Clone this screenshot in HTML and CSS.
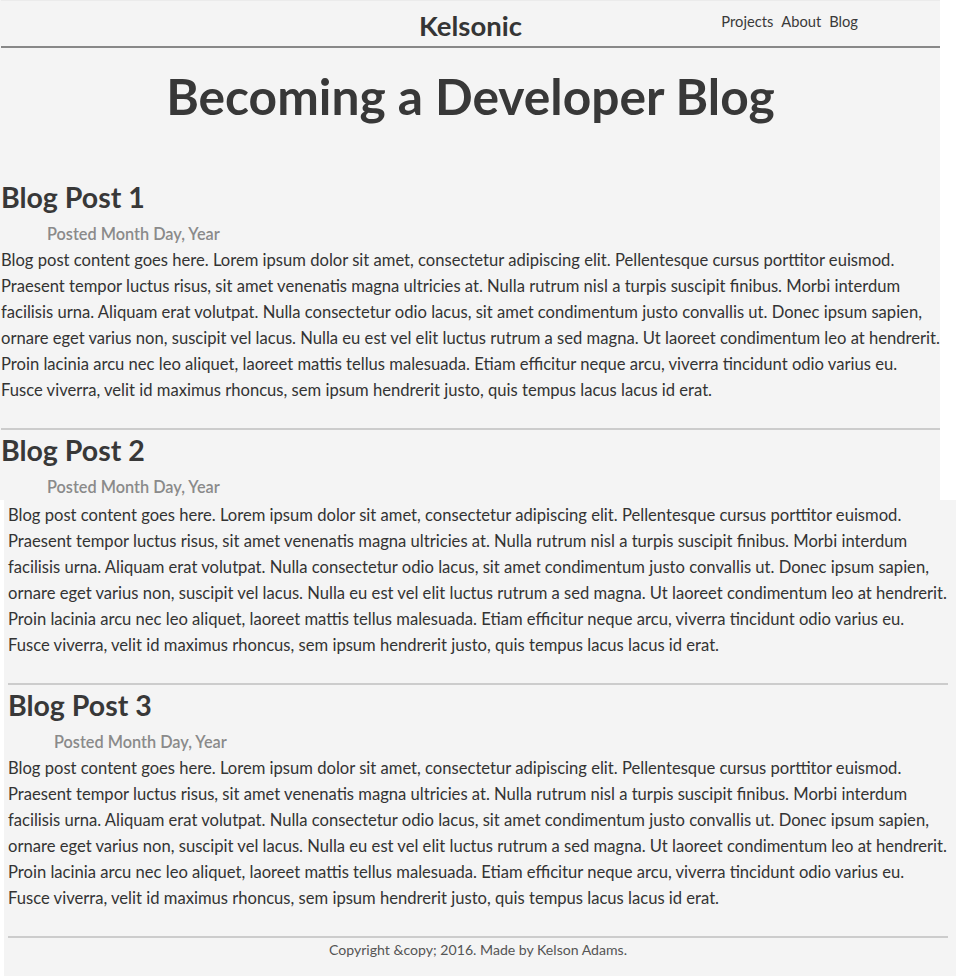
FILE: index.html
```html
<!DOCTYPE html>
<html lang="en">
<head>
<meta charset="utf-8">
<title>Becoming a Developer Blog</title>
<link rel="stylesheet" href="styles.css">
</head>
<body>
<div class="page-top">
  <header class="site-header">
    <div class="brand">Kelsonic</div>
    <nav class="nav">
      <a href="#">Projects</a>
      <a href="#">About</a>
      <a href="#">Blog</a>
    </nav>
  </header>
  <h1 class="page-title">Becoming a Developer Blog</h1>
  <article class="post">
    <h2 class="post-title">Blog Post 1</h2>
    <p class="post-date">Posted Month Day, Year</p>
    <p class="post-body">Blog post content goes here. Lorem ipsum dolor sit amet, consectetur adipiscing elit. Pellentesque cursus porttitor euismod.<br>Praesent tempor luctus risus, sit amet venenatis magna ultricies at. Nulla rutrum nisl a turpis suscipit finibus. Morbi interdum<br>facilisis urna. Aliquam erat volutpat. Nulla consectetur odio lacus, sit amet condimentum justo convallis ut. Donec ipsum sapien,<br>ornare eget varius non, suscipit vel lacus. Nulla eu est vel elit luctus rutrum a sed magna. Ut laoreet condimentum leo at hendrerit.<br>Proin lacinia arcu nec leo aliquet, laoreet mattis tellus malesuada. Etiam efficitur neque arcu, viverra tincidunt odio varius eu.<br>Fusce viverra, velit id maximus rhoncus, sem ipsum hendrerit justo, quis tempus lacus lacus id erat.</p>
  </article>
  <article class="post">
    <h2 class="post-title">Blog Post 2</h2>
    <p class="post-date">Posted Month Day, Year</p>
  </article>
</div>
<div class="page-bottom">
  <p class="post-body">Blog post content goes here. Lorem ipsum dolor sit amet, consectetur adipiscing elit. Pellentesque cursus porttitor euismod.<br>Praesent tempor luctus risus, sit amet venenatis magna ultricies at. Nulla rutrum nisl a turpis suscipit finibus. Morbi interdum<br>facilisis urna. Aliquam erat volutpat. Nulla consectetur odio lacus, sit amet condimentum justo convallis ut. Donec ipsum sapien,<br>ornare eget varius non, suscipit vel lacus. Nulla eu est vel elit luctus rutrum a sed magna. Ut laoreet condimentum leo at hendrerit.<br>Proin lacinia arcu nec leo aliquet, laoreet mattis tellus malesuada. Etiam efficitur neque arcu, viverra tincidunt odio varius eu.<br>Fusce viverra, velit id maximus rhoncus, sem ipsum hendrerit justo, quis tempus lacus lacus id erat.</p>
  <article class="post post-divided">
    <h2 class="post-title">Blog Post 3</h2>
    <p class="post-date">Posted Month Day, Year</p>
    <p class="post-body">Blog post content goes here. Lorem ipsum dolor sit amet, consectetur adipiscing elit. Pellentesque cursus porttitor euismod.<br>Praesent tempor luctus risus, sit amet venenatis magna ultricies at. Nulla rutrum nisl a turpis suscipit finibus. Morbi interdum<br>facilisis urna. Aliquam erat volutpat. Nulla consectetur odio lacus, sit amet condimentum justo convallis ut. Donec ipsum sapien,<br>ornare eget varius non, suscipit vel lacus. Nulla eu est vel elit luctus rutrum a sed magna. Ut laoreet condimentum leo at hendrerit.<br>Proin lacinia arcu nec leo aliquet, laoreet mattis tellus malesuada. Etiam efficitur neque arcu, viverra tincidunt odio varius eu.<br>Fusce viverra, velit id maximus rhoncus, sem ipsum hendrerit justo, quis tempus lacus lacus id erat.</p>
  </article>
  <footer class="site-footer">Copyright &amp;copy; 2016. Made by Kelson Adams.</footer>
</div>
</body>
</html>
```
FILE: styles.css
```css
html, body {
  margin: 0;
  padding: 0;
  background: #ffffff;
}

body {
  font-family: "Lato", "Open Sans", sans-serif;
  color: #353535;
}

.page-top {
  box-sizing: border-box;
  width: 940px;
  height: 500px;
  overflow: hidden;
  padding-left: 1px;
  background: #f4f4f4;
}

.page-bottom {
  box-sizing: border-box;
  width: 952px;
  margin-left: 4px;
  padding: 2px 8px 20px 4px;
  background: #f4f4f4;
}

.site-header {
  display: grid;
  grid-template-columns: 1fr auto 1fr;
  height: 41px;
  padding-top: 4px;
  border-top: 1px solid #ebebeb;
  border-bottom: 2px solid #888888;
}

.brand {
  grid-column: 2;
  font-size: 27.5px;
  font-weight: 700;
  line-height: 42px;
  color: #353535;
}

.nav {
  grid-column: 3;
  justify-self: end;
  align-self: start;
  display: flex;
  gap: 8px;
  margin-right: 82px;
  padding-top: 6px;
  font-size: 14.7px;
  line-height: 20px;
}

.nav a {
  color: #3a3a3a;
  text-decoration: none;
}

.page-title {
  margin: 18px 0 0;
  font-size: 49.7px;
  font-weight: 700;
  line-height: 60px;
  text-align: center;
  color: #383838;
}

.post {
  margin-top: 54px;
}

.post + .post,
.post-divided {
  margin-top: 25px;
  padding-top: 3px;
  border-top: 2px solid #cccccc;
}

.post-title {
  margin: 0;
  font-size: 28.5px;
  font-weight: 700;
  line-height: 34px;
  color: #383838;
}

.post-date {
  margin: 7px 0 0;
  padding-left: 46px;
  font-size: 16.3px;
  font-weight: 600;
  line-height: 26px;
  color: #8a8a8a;
}

.post-body {
  margin: 0;
  font-size: 16.6px;
  line-height: 26px;
  white-space: nowrap;
  color: #333333;
}

.site-footer {
  margin-top: 25px;
  padding-top: 2px;
  border-top: 2px solid #cccccc;
  font-size: 14.1px;
  line-height: 20px;
  text-align: center;
  color: #555555;
}
```
